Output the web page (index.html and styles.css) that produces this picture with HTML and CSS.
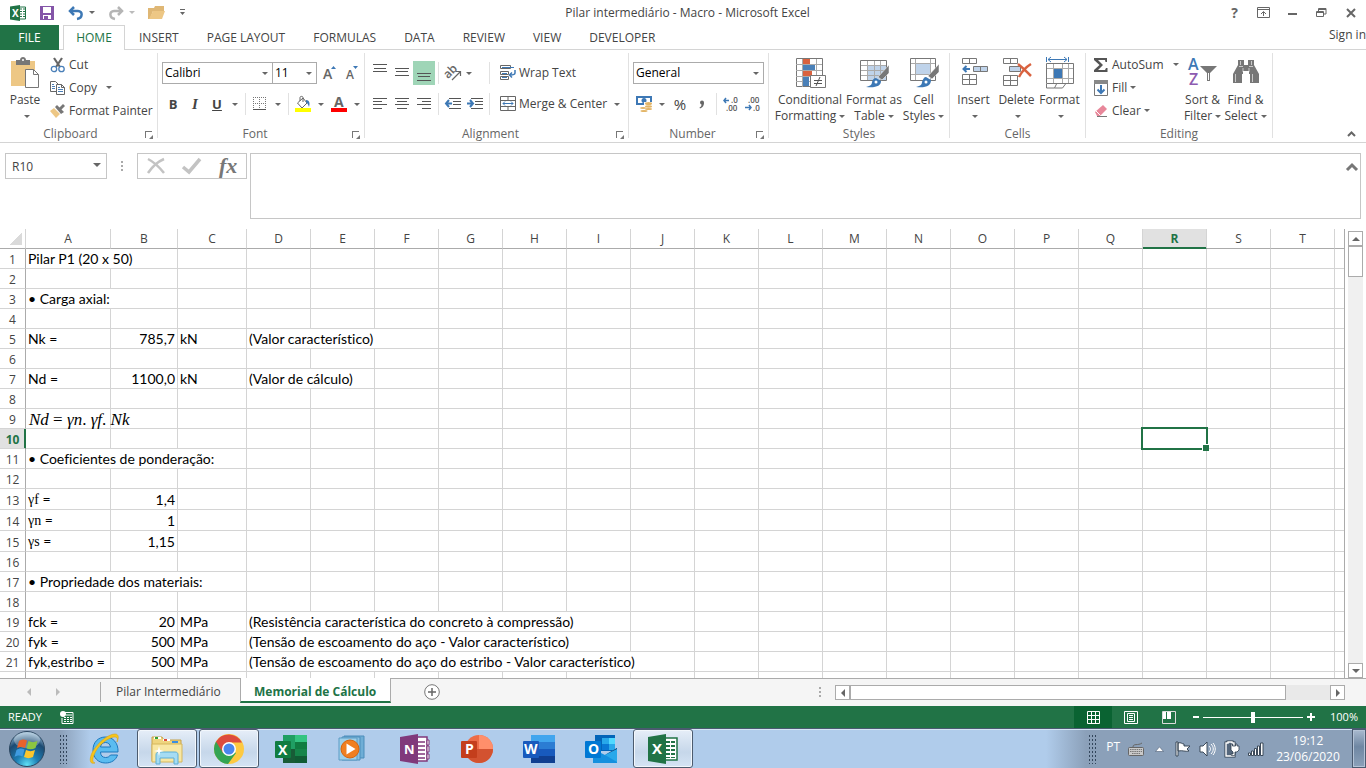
FILE: index.html
```
<!DOCTYPE html>
<html lang="en">
<head>
  <meta charset="UTF-8" />
  <meta name="viewport" content="width=device-width, initial-scale=1.0"/>
  <title>Pilar intermediário - Macro - Microsoft Excel</title>
  <link rel="stylesheet" href="styles.css">
</head>
<body>
  <!-- Title bar -->
  <header class="title-bar">
    <div class="quick-access">
      <svg class="app-icon" width="16" height="16" viewBox="0 0 16 16"><path d="M9 2h6.500v12H9z" fill="#fff" stroke="#217346"/><path d="M10 4h2M10 6.500h2M10 9h2M10 11.500h2M13 4h2M13 6.500h2M13 9h2M13 11.500h2" stroke="#217346"/><path d="M0 1.500L10 0v16L0 14.500z" fill="#217346"/><text x="2" y="12" font-size="10" font-weight="700" fill="#fff">X</text></svg>
      <button class="qa-btn" aria-label="Save"><svg width="14" height="14" viewBox="0 0 14 14"><path d="M0 0h14v14H0z" fill="#8455a8"/><path d="M3 1h8v6H3zM3 9h8v4H3z" fill="#fff"/><path d="M4 10h4v3H4z" fill="#8455a8"/></svg></button>
      <button class="qa-btn undo" aria-label="Undo"><svg width="16" height="14" viewBox="0 0 16 14"><path d="M2 5h8c5 0 5 7-1 8" fill="none" stroke="#3d78b5" stroke-width="2.500"/><path d="M6 1L2 5l4 4" fill="none" stroke="#3d78b5" stroke-width="2.500"/></svg><i class="caret"></i></button>
      <button class="qa-btn undo" aria-label="Redo"><svg width="16" height="14" viewBox="0 0 16 14"><path d="M14 5H6c-5 0-5 7 1 8" fill="none" stroke="#b5b5b5" stroke-width="2.500"/><path d="M10 1l4 4-4 4" fill="none" stroke="#b5b5b5" stroke-width="2.500"/></svg><i class="caret light"></i></button>
      <button class="qa-btn" aria-label="Open"><svg width="17" height="14" viewBox="0 0 17 14"><path d="M0 13V2h6l1-2h9v5H5L2 13z" fill="#dfb775"/><path d="M5 5h12l-3 8H1z" fill="#edc785"/></svg></button>
      <button class="qa-btn" aria-label="Customize Quick Access Toolbar"><svg width="7" height="7" viewBox="0 0 7 7"><path d="M1 0h5v1H1zM1 3h5L3.500 6z" fill="#666"/></svg></button>
    </div>
    <h1>Pilar intermediário - Macro - Microsoft Excel</h1>
    <div class="window-buttons">
      <button aria-label="Help" class="help">?</button>
      <button aria-label="Ribbon Display Options"><svg width="13" height="11" viewBox="0 0 13 11"><path d="M.5.5h12v10H.5zM0 2.500h13M6.500 9V5M4 7l2.500-2.500L9 7" fill="none" stroke="#666"/></svg></button>
      <button aria-label="Minimize"><svg width="9" height="9" viewBox="0 0 9 9"><path d="M0 5h9v2H0z" fill="#666"/></svg></button>
      <button aria-label="Restore Down"><svg width="11" height="10" viewBox="0 0 11 10"><path d="M.5 3.500h7v5h-7zM.5 4.500h7M2.500 3V.5h7.500v5.500H8M2.500 1.500H10" fill="none" stroke="#666"/></svg></button>
      <button aria-label="Close"><svg width="10" height="10" viewBox="0 0 10 10"><path d="M1 1l8 8M9 1L1 9" stroke="#666" stroke-width="2"/></svg></button>
    </div>
  </header>

  <!-- Ribbon tabs -->
  <nav class="ribbon-tabs">
    <button class="tab file">FILE</button>
    <button class="tab active">HOME</button>
    <button class="tab">INSERT</button>
    <button class="tab">PAGE LAYOUT</button>
    <button class="tab">FORMULAS</button>
    <button class="tab">DATA</button>
    <button class="tab">REVIEW</button>
    <button class="tab">VIEW</button>
    <button class="tab">DEVELOPER</button>
    <a class="sign-in" href="#">Sign in</a>
  </nav>

  <!-- Ribbon -->
  <section class="ribbon">
    <div class="group clipboard">
      <div class="group-body">
        <button class="big-btn paste"><svg width="28" height="32" viewBox="0 0 28 32"><path d="M0 4h24v25H0z" fill="#edc785"/><path d="M5 3h4c0-4 6-4 6 0h4v5H5z" fill="#777"/><circle cx="12" cy="3" r="1" fill="#fff"/><path d="M14.500 12.500h8l5 5v13h-13z" fill="#fff" stroke="#777"/><path d="M22.500 12.500v5h5" fill="none" stroke="#777"/></svg><span>Paste</span><span><i class="caret"></i></span></button>
        <div class="small-list">
          <button class="small-btn"><svg width="16" height="16" viewBox="0 0 16 16"><path d="M4 1l6 9M12 1L6 10" stroke="#666" stroke-width="2.200"/><circle cx="4" cy="12" r="2.700" fill="none" stroke="#4a7fb8" stroke-width="1.300"/><circle cx="11.500" cy="12" r="2.700" fill="none" stroke="#4a7fb8" stroke-width="1.300"/></svg>Cut</button>
          <button class="small-btn"><svg width="16" height="16" viewBox="0 0 16 16"><path d="M.5 1.500h5l3 3v7h-8z" fill="#fff" stroke="#666"/><path d="M2 4.500h2M2 6.500h3M2 8.500h3" stroke="#4a7fb8"/><path d="M6.500 4.500h5l3 3v7h-8z" fill="#fff" stroke="#666"/><path d="M11.500 4.500v3h3" fill="none" stroke="#666"/><path d="M8 9.500h5M8 11.500h5M8 7.500h2" stroke="#4a7fb8"/></svg>Copy<i class="caret far"></i></button>
          <button class="small-btn"><svg width="16" height="16" viewBox="0 0 16 16"><path d="M0 8l4-3 6 6-4 4z" fill="#edc785"/><path d="M5 4l2-2 7 7-3 2z" fill="#777"/><path d="M9 5l4-4 2 2-4 4z" fill="#777"/></svg>Format Painter</button>
        </div>
      </div>
      <div class="group-label">Clipboard<button class="launcher" aria-label="Clipboard settings"></button></div>
    </div>

    <div class="group font">
      <div class="group-body rows">
        <div class="tool-row">
          <label class="combo name"><select aria-label="Font"><option>Calibri</option></select></label>
          <label class="combo size"><select aria-label="Font Size"><option>11</option></select></label>
          <button class="tool" aria-label="Increase Font Size"><svg width="14" height="16" viewBox="0 0 14 16"><text x="0" y="14" font-size="14" font-weight="600" fill="#666">A</text><path d="M8 4l2.500-3L13 4z" fill="#3d78b5"/></svg></button>
          <button class="tool" aria-label="Decrease Font Size"><svg width="14" height="16" viewBox="0 0 14 16"><text x="1" y="14" font-size="12" font-weight="600" fill="#666">A</text><path d="M8 1h5l-2.500 3z" fill="#3d78b5"/></svg></button>
        </div>
        <div class="tool-row">
          <button class="tool letter"><b>B</b></button>
          <button class="tool letter serif"><i>I</i></button>
          <button class="tool letter"><u>U</u></button>
          <button class="drop" aria-label="Underline options"><i class="caret"></i></button>
          <span class="sep"></span>
          <button class="tool" aria-label="Borders"><svg width="14" height="14" viewBox="0 0 14 14"><path d="M.5 0v13M6.500 0v13M12.500 0v13M0 .5h13M0 6.500h13" stroke="#777" stroke-dasharray="1 1"/><path d="M0 12.500h13" stroke="#555"/></svg></button>
          <button class="drop" aria-label="Border options"><i class="caret"></i></button>
          <span class="sep"></span>
          <button class="tool" aria-label="Fill Color"><svg width="16" height="16" viewBox="0 0 16 16"><path d="M2.500 7L8 2l4 5-5 5zM5 5V1.500c0-1.500 3-1.500 3 0V6" fill="#fff" stroke="#666"/><path d="M11 4c4 0 4 4 3 7-1-3-1-3-3-5z" fill="#3d78b5"/><path d="M0 12h16v4H0z" fill="#ff0"/></svg></button>
          <button class="drop" aria-label="Fill colors"><i class="caret"></i></button>
          <button class="tool" aria-label="Font Color"><svg width="16" height="16" viewBox="0 0 16 16"><text x="3" y="11" font-size="14" font-weight="700" fill="#666">A</text><path d="M0 12h16v4H0z" fill="#f00"/></svg></button>
          <button class="drop" aria-label="Font colors"><i class="caret"></i></button>
        </div>
      </div>
      <div class="group-label">Font<button class="launcher" aria-label="Font settings"></button></div>
    </div>

    <div class="group alignment">
      <div class="group-body rows">
        <div class="tool-row">
          <button class="tool" aria-label="Top Align"><svg width="14" height="22" viewBox="0 0 14 22"><path d="M0 2.500h14M1 6.500h12M0 9.500h14" stroke="#555"/></svg></button>
          <button class="tool" aria-label="Middle Align"><svg width="14" height="22" viewBox="0 0 14 22"><path d="M0 6.500h14M1 9.500h12M0 13.500h14" stroke="#555"/></svg></button>
          <button class="tool pressed" aria-label="Bottom Align"><svg width="14" height="22" viewBox="0 0 14 22"><path d="M0 11.500h14M1 14.500h12M0 18.500h14" stroke="#555"/></svg></button>
          <span class="sep"></span>
          <button class="tool" aria-label="Orientation"><svg width="17" height="16" viewBox="0 0 17 16"><text x="-1" y="11" font-size="12" font-weight="600" fill="#666" transform="rotate(-45 5 8)">ab</text><path d="M7 15l8-8M11 6.500h4.500V11" fill="none" stroke="#666" stroke-width="1.200"/></svg></button>
          <button class="drop narrow" aria-label="Orientation options"><i class="caret"></i></button>
          <span class="sep wide"></span>
          <button class="text-tool"><svg width="16" height="16" viewBox="0 0 16 16"><path d="M.5.5h10v3H.5zM.5 6.500h8v3h-8zM.5 11.500h8v3h-8z" fill="#fff" stroke="#666"/><path d="M2 2.500h12M2 8.500h5M2 12.500h5" stroke="#3d78b5"/><path d="M15 5v3c0 2-2 2-5 2M12 7.500L9.500 10l2.500 2.500" fill="none" stroke="#3d78b5" stroke-width="1.500"/></svg>Wrap Text</button>
        </div>
        <div class="tool-row">
          <button class="tool" aria-label="Align Left"><svg width="14" height="12" viewBox="0 0 14 12"><path d="M0 .5h14M0 3.500h9M0 6.500h14M0 10.500h9" stroke="#555"/></svg></button>
          <button class="tool" aria-label="Center"><svg width="14" height="12" viewBox="0 0 14 12"><path d="M0 .5h14M2 3.500h10M0 6.500h14M2 10.500h10" stroke="#555"/></svg></button>
          <button class="tool" aria-label="Align Right"><svg width="14" height="12" viewBox="0 0 14 12"><path d="M0 .5h14M5 3.500h9M0 6.500h14M5 10.500h9" stroke="#555"/></svg></button>
          <span class="sep"></span>
          <button class="tool" aria-label="Decrease Indent"><svg width="16" height="12" viewBox="0 0 16 12"><path d="M4 .5h12M8 3.500h8M8 6.500h8M4 10.500h12" stroke="#555"/><path d="M7 5.500H1M4 2L1 5.500 4 9" fill="none" stroke="#3d78b5" stroke-width="2"/></svg></button>
          <button class="tool" aria-label="Increase Indent"><svg width="16" height="12" viewBox="0 0 16 12"><path d="M4 .5h12M8 3.500h8M8 6.500h8M4 10.500h12" stroke="#555"/><path d="M0 5.500h6M3 2l3 3.500L3 9" fill="none" stroke="#3d78b5" stroke-width="2"/></svg></button>
          <span class="sep"></span>
          <button class="text-tool"><svg width="16" height="16" viewBox="0 0 16 16"><path d="M.5.500h15v14H.5zM.5 4.500h15M.5 10.500h15M8 0v4M8 11v4" fill="none" stroke="#666"/><path d="M3 7.500h10M5 5.500l-2 2 2 2M11 5.500l2 2-2 2" fill="none" stroke="#3d78b5"/></svg>Merge &amp; Center<i class="caret"></i></button>
        </div>
      </div>
      <div class="group-label">Alignment<button class="launcher" aria-label="Alignment settings"></button></div>
    </div>

    <div class="group number">
      <div class="group-body rows">
        <div class="tool-row">
          <label class="combo format"><select aria-label="Number Format"><option>General</option></select></label>
        </div>
        <div class="tool-row">
          <button class="tool" aria-label="Accounting Number Format"><svg width="17" height="16" viewBox="0 0 17 16"><path d="M0 0h16v9H0z" fill="#3d78b5"/><path d="M2 2h12v5H2z" fill="#fff"/><circle cx="8" cy="4.500" r="2.500" fill="#3d78b5"/><path d="M8 6h9v9H4v-4h4z" fill="#fff"/><ellipse cx="12.500" cy="7.500" rx="3.500" ry="1.500" fill="#e3b567"/><ellipse cx="12.500" cy="10.500" rx="3.500" ry="1.200" fill="#e3b567"/><ellipse cx="12.500" cy="13" rx="3.500" ry="1" fill="#e3b567"/><ellipse cx="7" cy="12" rx="3" ry="1" fill="#e3b567"/><ellipse cx="8" cy="15" rx="3.500" ry="1" fill="#e3b567"/></svg></button>
          <button class="drop" aria-label="Accounting formats"><i class="caret"></i></button>
          <button class="tool letter percent">%</button>
          <button class="tool letter comma" aria-label="Comma Style"><svg width="6" height="9" viewBox="0 0 6 9"><circle cx="3" cy="2.500" r="2" fill="#666"/><path d="M5 2.500c0 3-1 5-4 6l-.5-1c2-1 2-2 2-4z" fill="#666"/></svg></button>
          <span class="sep"></span>
          <button class="tool" aria-label="Increase Decimal"><svg width="16" height="14" viewBox="0 0 16 14"><text x="8" y="6" font-size="8" font-weight="600" fill="#555">.0</text><text x="3" y="14" font-size="8" font-weight="600" fill="#555">.00</text><path d="M6 3.500H1M3 1L1 3.500 3 6" fill="none" stroke="#3d78b5" stroke-width="1.500"/></svg></button>
          <button class="tool" aria-label="Decrease Decimal"><svg width="16" height="14" viewBox="0 0 16 14"><text x="3" y="6" font-size="8" font-weight="600" fill="#555">.00</text><text x="8" y="14" font-size="8" font-weight="600" fill="#555">.0</text><path d="M0 10.500h6M4 8l2 2.500L4 13" fill="none" stroke="#3d78b5" stroke-width="1.500"/></svg></button>
        </div>
      </div>
      <div class="group-label">Number<button class="launcher" aria-label="Number settings"></button></div>
    </div>

    <div class="group styles">
      <div class="group-body">
        <button class="big-btn wide"><svg width="32" height="32" viewBox="0 0 32 32"><path d="M2.500 1.500h26v28h-26z" fill="#fff" stroke="#777"/><path d="M8.500 2v28M22.500 2v28M2 7.500h26M2 13.500h26M2 19.500h26M2 24.500h26" stroke="#aaa"/><path d="M9 2h7v5H9zM9 14h9v5H9z" fill="#d9623f"/><path d="M9 8h12v5H9zM9 20h6v9H9z" fill="#4a80b8"/><path d="M16.500 18.500h15v12h-15z" fill="#fff" stroke="#777"/><path d="M20 23.500h8M20 26.500h8M26 20l-4 9" stroke="#555"/></svg><span>Conditional</span><span>Formatting<i class="caret"></i></span></button>
        <button class="big-btn mid"><svg width="32" height="32" viewBox="0 0 32 32"><path d="M2.500 3.500h26v20h-26z" fill="#fff" stroke="#777"/><path d="M10 9h18v14H10z" fill="#bfd3ea"/><path d="M9.500 4v19M16.500 4v19M22.500 4v19M3 8.500h25M3 13.500h25M3 18.500h25" stroke="#aaa"/><path d="M31 8v8l-7 7-4-3z" fill="#777" stroke="#fff" stroke-width=".5"/><path d="M18 21l5 3c0 5-5 7-15 6 5-1 6-3 6-5 1-3 2-4 4-4z" fill="#3d78b5"/><circle cx="18" cy="25" r="1.500" fill="#fff"/></svg><span>Format as</span><span>Table<i class="caret"></i></span></button>
        <button class="big-btn"><svg width="32" height="32" viewBox="0 0 32 32"><path d="M2.500 1.500h25v22h-25z" fill="#fff" stroke="#777"/><path d="M8 7h14v10H8z" fill="#bfd3ea"/><path d="M7.500 2v21M22.500 2v21M3 6.500h24M3 17.500h24" stroke="#aaa"/><path d="M31 7v8l-7 7-4-3z" fill="#777" stroke="#fff" stroke-width=".5"/><path d="M18 20l5 3c0 6-5 8-15 7 5-1 6-3 6-5 1-3 2-5 4-5z" fill="#3d78b5"/><circle cx="18" cy="25" r="1.500" fill="#fff"/></svg><span>Cell</span><span>Styles<i class="caret"></i></span></button>
      </div>
      <div class="group-label">Styles</div>
    </div>

    <div class="group cells">
      <div class="group-body">
        <button class="big-btn"><svg width="28" height="32" viewBox="0 0 28 32"><path d="M2.500 1.500h14v5h-14zM9.500 1v5M2.500 17.500h14v10h-14zM9.500 17v10M2 22.500h14" fill="none" stroke="#777"/><path d="M13.500 9.500h14v5h-14z" fill="#bfd3ea" stroke="#777"/><path d="M20.500 9v6" stroke="#777"/><path d="M10 12H4M6.500 9L3.500 12l3 3" fill="none" stroke="#3d78b5" stroke-width="2"/></svg><span>Insert</span><span><i class="caret"></i></span></button>
        <button class="big-btn"><svg width="30" height="32" viewBox="0 0 30 32"><path d="M1.500 1.500h14v5h-14zM8.500 1v5M1.500 18.500h14v10h-14zM8.500 18v10M1 23.500h14" fill="none" stroke="#777"/><path d="M7.500 9.500h11v5h-11z" fill="#bfd3ea" stroke="#777"/><path d="M16 7c4 3 8 7 13 12M29 7c-5 3-9 7-12 13" fill="none" stroke="#d9623f" stroke-width="2.500"/></svg><span>Delete</span><span><i class="caret"></i></span></button>
        <button class="big-btn"><svg width="30" height="32" viewBox="0 0 30 32"><path d="M1.500 0v5M23.500 0v5M3 2.500h19M6 0L3 2.500 6 5M19 0l3 2.500L19 5" fill="none" stroke="#3d78b5"/><path d="M1.500 6.500h27v20h-27z" fill="#fff" stroke="#777"/><path d="M8.500 7v19M17.500 7v19M23.500 7v19M2 11.500h26M2 21.500h26" stroke="#aaa"/><path d="M9 12h8v9H9z" fill="#3d78b5"/><path d="M1.500 27v4h8l2-4M9.500 31h8l3-4" fill="none" stroke="#777"/></svg><span>Format</span><span><i class="caret"></i></span></button>
      </div>
      <div class="group-label">Cells</div>
    </div>

    <div class="group editing">
      <div class="group-body">
        <div class="small-list">
          <button class="small-btn"><svg width="16" height="16" viewBox="0 0 16 16"><path d="M1 1h13v4h-1.500L12 3H5l5 5-5 5h7l1-2h1.500v4H1v-2l5.500-5L1 3z" fill="#555"/></svg>AutoSum<i class="caret far"></i></button>
          <button class="small-btn"><svg width="16" height="16" viewBox="0 0 16 16"><path d="M1.500.5h13v15h-13z" fill="#fff" stroke="#777"/><path d="M1 0h14v4H1z" fill="#888"/><path d="M8 5v8M4.500 9.500L8 13l3.500-3.500" fill="none" stroke="#3d78b5" stroke-width="2"/></svg>Fill<i class="caret"></i></button>
          <button class="small-btn"><svg width="16" height="16" viewBox="0 0 16 16"><path d="M2 9l8-7 4 4-7 7H4z" fill="#e8879a"/><path d="M3 8l4.500 4.500" stroke="#fff"/><path d="M4 13.500h10" stroke="#777"/></svg>Clear<i class="caret"></i></button>
        </div>
        <button class="big-btn"><svg width="30" height="32" viewBox="0 0 30 32"><text x="0" y="13" font-size="16" font-weight="600" fill="#3d78b5">A</text><text x="1" y="28" font-size="16" font-weight="600" fill="#8d5bb0">Z</text><path d="M12 9h17l-7 7v8h-3v-8z" fill="#777"/><path d="M20.500 16v7" stroke="#fff"/></svg><span>Sort &amp;</span><span>Filter<i class="caret"></i></span></button>
        <button class="big-btn"><svg width="28" height="32" viewBox="0 0 28 32"><path d="M6 3h6v5h4V3h6v5l5 9v9h-9v-9h-1v-3h-6v3h-1v9H1v-9l5-9z" fill="#777"/><path d="M8.500 4v4M19.500 4v4M3.500 17v8M11 11v4M17 11v4M20.500 17v8M7 9.500h4M17 9.500h4" stroke="#fff" stroke-width=".6"/></svg><span>Find &amp;</span><span>Select<i class="caret"></i></span></button>
      </div>
      <div class="group-label">Editing</div>
    </div>
    <button class="collapse" aria-label="Collapse the Ribbon"><svg width="9" height="6" viewBox="0 0 9 6"><path d="M1 5l3.500-3.500L8 5" fill="none" stroke="#666" stroke-width="2"/></svg></button>
  </section>

  <!-- Formula bar -->
  <section class="formula-bar">
    <label class="name-box"><input type="text" value="R10" aria-label="Name Box"></label>
    <span class="dots"></span>
    <div class="formula-buttons">
      <button aria-label="Cancel"><svg width="18" height="16" viewBox="0 0 18 16"><path d="M1 1c6 3 12 9 16 14M17 1C10 4 5 9 1 15" fill="none" stroke="#c3c3c3" stroke-width="2.500"/></svg></button>
      <button aria-label="Enter"><svg width="20" height="16" viewBox="0 0 20 16"><path d="M1 9l6 5L18 1" fill="none" stroke="#c3c3c3" stroke-width="3.500"/></svg></button>
      <button class="fx">fx</button>
    </div>
    <div class="formula-input">
      <textarea aria-label="Formula Bar"></textarea>
      <button aria-label="Collapse Formula Bar"><svg width="12" height="8" viewBox="0 0 12 8"><path d="M1 7l5-5 5 5" fill="none" stroke="#777" stroke-width="3"/></svg></button>
    </div>
  </section>

  <!-- Worksheet -->
  <main class="sheet">
    <div class="grid-view" id="gridView"><table class="grid" id="grid"></table></div>
    <div class="v-scroll">
      <button class="scroll-btn up" aria-label="Scroll up"></button>
      <div class="thumb"></div>
      <button class="scroll-btn down" aria-label="Scroll down"></button>
    </div>
  </main>

  <!-- Sheet tabs -->
  <nav class="sheet-bar">
    <div class="sheet-nav">
      <button class="arrow left" aria-label="Previous sheet"></button>
      <button class="arrow right" aria-label="Next sheet"></button>
    </div>
    <button class="sheet-tab">Pilar Intermediário</button>
    <button class="sheet-tab active">Memorial de Cálculo</button>
    <button class="add-sheet" aria-label="New sheet"><svg width="16" height="16" viewBox="0 0 16 16"><circle cx="8" cy="8" r="7.300" fill="#fff" stroke="#777"/><path d="M8 4v8M4 8h8" stroke="#666" stroke-width="1.500"/></svg></button>
    <span class="dots"></span>
    <div class="h-scroll">
      <button class="scroll-btn left" aria-label="Scroll left"></button>
      <div class="thumb"></div>
      <button class="scroll-btn right" aria-label="Scroll right"></button>
    </div>
  </nav>

  <!-- Status bar -->
  <footer class="status-bar">
    <span>READY</span>
    <svg width="14" height="13" viewBox="0 0 14 13"><path d="M5 1.500h8v11H2V7" fill="none" stroke="#fff"/><path d="M6 4h6M4 6.500h2M7 6.500h2M10 6.500h2M4 8.500h2M7 8.500h2M10 8.500h2M4 10.500h2M7 10.500h2M10 10.500h2" stroke="#fff"/><circle cx="3" cy="3" r="3" fill="#fff"/></svg>
    <div class="views">
      <button class="on" aria-label="Normal"><svg width="13" height="13" viewBox="0 0 13 13"><path d="M.5.5h12v12H.5zM4.500 0v13M8.500 0v13M0 4.500h13M0 8.500h13" fill="none" stroke="#fff"/></svg></button>
      <button aria-label="Page Layout"><svg width="14" height="13" viewBox="0 0 14 13"><path d="M.5.5h13v12H.5zM3.500 2.500h7v8h-7zM5 4.500h4M5 6.500h4M5 8.500h4" fill="none" stroke="#fff"/></svg></button>
      <button aria-label="Page Break Preview"><svg width="14" height="13" viewBox="0 0 14 13"><path d="M.5.5h13v12H.5z" fill="none" stroke="#ddd"/><path d="M1 1h3v7H1zM5 1h4v7H5z" fill="#fff"/></svg></button>
    </div>
    <button class="zoom-btn" aria-label="Zoom out"><svg width="8" height="8" viewBox="0 0 8 8"><path d="M1 3h6v2H1z" fill="#fff"/></svg></button>
    <input class="zoom" type="range" min="10" max="190" value="100" aria-label="Zoom">
    <button class="zoom-btn" aria-label="Zoom in"><svg width="8" height="8" viewBox="0 0 8 8"><path d="M0 3h8v2H0zM3 0h2v8H3z" fill="#fff"/></svg></button>
    <span class="zoom-value">100%</span>
  </footer>

  <!-- Taskbar -->
  <footer class="taskbar">
    <button class="start" aria-label="Start"><svg width="38" height="38" viewBox="0 0 38 38">
      <defs><radialGradient id="orb" cx=".5" cy=".95" r=".9"><stop offset="0" stop-color="#5fe0f5"/><stop offset=".35" stop-color="#1d7fb5"/><stop offset=".75" stop-color="#1c4a72"/><stop offset="1" stop-color="#8fb4cf"/></radialGradient></defs>
      <circle cx="19" cy="19" r="17.500" fill="url(#orb)" stroke="#2b4660"/><ellipse cx="19" cy="10" rx="13" ry="8" fill="#fff" opacity=".3"/>
      <path d="M11 11c3-2 5-2 8-.5l-2 7.500c-3-1.500-5-1.500-8 0z" fill="#e8622c"/><path d="M20.500 11c3 1.500 6 1.500 9 0l-2 7c-3 1.500-6 1.500-9 .5z" fill="#8cc540"/><path d="M8.500 20c3-2 5-2 8-.5l-2 7c-3-1.500-5-1.500-8 .5z" fill="#3f9be0"/><path d="M18 20c3 1.500 6 1.500 9 0l-2 7c-3 1.500-6 1.500-9 0z" fill="#fcc62d"/></svg></button>
    <span class="grip"></span>
    <div class="apps">
      <button aria-label="Internet Explorer"><svg width="32" height="32" viewBox="0 0 32 32"><path d="M16.500 4C9 4 4 9.500 4 17s5 13 12.500 13c6 0 10.500-3 12-8h-7c-1 1.500-2.500 2.500-5 2.500-3 0-5-2-5-5.500h17.500C29.500 10 24 4 16.500 4zM11.500 14c.5-3 2.500-4.500 5-4.500s4.500 1.500 5 4.500z" fill="#5bbcf0" stroke="#1c78bd"/><path d="M6 30C0 32 0 25 4 18 10 8 20 1 26 1c4 0 4 4 2 8 1-4 0-5-3-5C19 5 11 11 7 18c-4 7-4 11-1 12z" fill="#f6c51c" stroke="#d59b10" stroke-width=".5"/></svg></button>
      <button class="open" aria-label="Windows Explorer"><svg width="32" height="32" viewBox="0 0 32 32"><path d="M1 4h10l2 3h17v21H1z" fill="#efd57f" stroke="#c7a24a"/><path d="M3 4h7v2H3zM12 6h7v2h-7z" fill="#fff"/><path d="M4 4h3v2H4z" fill="#35a035"/><path d="M13 6h3v2h-3z" fill="#dd4b39"/><path d="M21 8h6v2h-6z" fill="#3b8ee0"/><path d="M1 11h30v18H1z" fill="#f8e7a3" stroke="#d5b65c"/><path d="M5 31V22c0-2 1-3 3-3h16c2 0 3 1 3 3v9h-4v-6H9v6z" fill="#a5dcf3" stroke="#5caed6"/><path d="M8 13l1 4 4 1-4 1-1 4-1-4-4-1 4-1z" fill="#fff"/></svg></button>
      <button class="open" aria-label="Google Chrome"><svg width="30" height="30" viewBox="0 0 30 30"><circle cx="15" cy="15" r="15" fill="#fdc941"/><path d="M15 15L2 7.500A15 15 0 0 0 14 30l8-11z" fill="#33a453"/><path d="M2 7.500A15 15 0 0 1 28 8.500H15L9 19z" fill="#dd4b3e"/><circle cx="15" cy="15" r="7" fill="#fff"/><circle cx="15" cy="15" r="5.500" fill="#4a86ee"/></svg></button>
      <button aria-label="Excel"><svg width="32" height="28" viewBox="0 0 32 28"><path d="M8 0h12v14H8z" fill="#1f9f63"/><path d="M20 0h12v7H20z" fill="#33c481"/><path d="M20 7h12v7H20z" fill="#107c41"/><path d="M8 14h12v14H8z" fill="#185c37"/><path d="M20 14h12v7H20z" fill="#16854a"/><path d="M20 21h12v7H20z" fill="#105c34"/><rect y="6" width="16" height="17" rx="1" fill="#107c41"/><text x="3" y="20" font-size="14" font-weight="700" fill="#fff">X</text></svg></button>
      <button aria-label="Windows Media Player"><svg width="30" height="28" viewBox="0 0 30 28"><path d="M6 1h20v22H6z" fill="#6faed6" stroke="#4c8dba"/><path d="M4 2h18v23H4z" fill="#8bc2e2" stroke="#4c8dba"/><path d="M1 3h18v22H1z" fill="#9fd0ea" stroke="#5c9cc4"/><circle cx="12" cy="14" r="9" fill="#f07f21" stroke="#d8640c"/><path d="M8.500 8.500l9 5.500-9 5.500z" fill="#fff"/></svg></button>
      <button aria-label="OneNote"><svg width="30" height="30" viewBox="0 0 30 30"><path d="M16 3h11v24H16z" fill="#fff" stroke="#80397b" stroke-width="1.500"/><path d="M27 6h2v5h-2zM27 12h2v6h-2zM27 20h2v5h-2z" fill="#fff" stroke="#80397b"/><path d="M18 8h7M18 12h7M18 16h7M18 20h7M18 24h7" stroke="#80397b" stroke-width="1.300"/><path d="M0 3l18-3v30L0 27z" fill="#80397b"/><text x="4" y="20" font-size="13" font-weight="700" fill="#fff">N</text></svg></button>
      <button aria-label="PowerPoint"><svg width="32" height="28" viewBox="0 0 32 28"><circle cx="18" cy="14" r="14" fill="#ed6c47"/><path d="M18 0a14 14 0 0 1 14 14H18z" fill="#ff8f6b"/><path d="M4 14h28a14 14 0 0 1-28 0z" fill="#d35230"/><rect y="6" width="16" height="17" rx="1" fill="#c43e1c"/><text x="4" y="19" font-size="14" font-weight="700" fill="#fff">P</text></svg></button>
      <button aria-label="Word"><svg width="32" height="28" viewBox="0 0 32 28"><path d="M8 0h24v7H8z" fill="#41a5ee"/><path d="M8 7h24v7H8z" fill="#2b7cd3"/><path d="M8 14h24v7H8z" fill="#185abd"/><path d="M8 21h24v7H8z" fill="#103f91"/><rect y="6" width="16" height="17" rx="1" fill="#185abd"/><text x="1" y="19" font-size="14" font-weight="700" fill="#fff">W</text></svg></button>
      <button aria-label="Outlook"><svg width="32" height="28" viewBox="0 0 32 28"><path d="M10 0h20v16H10z" fill="#0364b8"/><path d="M17 3h7v6h-7z" fill="#28a8ea"/><path d="M24 3h6v6h-6z" fill="#50d9ff"/><path d="M17 9h7v6h-7z" fill="#0a78d4"/><path d="M24 9h6v6h-6z" fill="#28a8ea"/><path d="M8 14l12 6 12-7v15H8z" fill="#1490df"/><path d="M20 20l12-7v14z" fill="#28a8ea"/><path d="M20 20l12-6v-1z" fill="#123b6d"/><rect y="6" width="16" height="17" rx="1" fill="#0078d4"/><text x="3" y="19" font-size="14" font-weight="700" fill="#fff">O</text></svg></button>
      <button class="open" aria-label="Excel window"><svg width="30" height="30" viewBox="0 0 30 30"><path d="M16 4h13v22H16z" fill="#fff" stroke="#217346" stroke-width="1.500"/><path d="M18 7h4v2h-4zM18 11h4v2h-4zM18 15h4v2h-4zM18 19h4v2h-4zM18 23h4v1h-4zM23 7h4v2h-4zM23 11h4v2h-4zM23 15h4v2h-4zM23 19h4v2h-4zM23 23h4v1h-4z" fill="#217346"/><path d="M0 3l18-3v30L0 27z" fill="#217346"/><text x="4" y="20" font-size="15" font-weight="700" fill="#fff">X</text></svg></button>
    </div>
    <div class="tray">
      <span class="grip"></span>
      <span class="lang">PT</span>
      <svg width="16" height="14" viewBox="0 0 16 14"><path d="M5 5c0-4 5-1 9-4" fill="none" stroke="#666"/><rect x=".5" y="5.500" width="15" height="8" rx="1" fill="#c9c9c9" stroke="#666"/><path d="M2 7.500h12M2 9.500h12M4 11.500h8" stroke="#777" stroke-dasharray="1.500 .7"/></svg>
      <svg class="more" width="9" height="6" viewBox="0 0 9 6"><path d="M.5 5.500h8L4.500.8z" fill="#fff" stroke="#4b5d73" stroke-width=".6"/></svg>
      <svg class="flag" width="16" height="16" viewBox="0 0 16 16"><path d="M1 1h2v14H1zM3 2c3-1 4 1 6 1v2h6l-3 3 2 2c-4 1-6-1-11 0z" fill="#fff" stroke="#2e3c4c" stroke-width=".9"/></svg>
      <svg width="17" height="16" viewBox="0 0 17 16"><path d="M1 5h3l4-4v14l-4-4H1z" fill="#fff" stroke="#2e3c4c" stroke-width=".9"/><path d="M10 5c2 2 2 4 0 6M12 3c3 3 3 7 0 10M14 2c3 4 3 8 0 12" fill="none" stroke="#fff"/></svg>
      <svg width="16" height="16" viewBox="0 0 16 16"><path d="M2 2h2V1h4v1h2v13H2z" fill="none" stroke="#2e3c4c" stroke-width="3"/><path d="M2 2h2V1h4v1h2v13H2z" fill="#55677c" stroke="#fff" stroke-width="1.400"/><path d="M7 6V3h1.500v2h3V3H13v2h2v4l-2 2h-2v3c-1 1-3 1-4 0v-1h2v-2L7 9z" fill="#fff" stroke="#2e3c4c" stroke-width=".8"/></svg>
      <svg width="16" height="14" viewBox="0 0 16 14"><path d="M.5 11h2v2.500h-2zM3.500 9h2v4.500h-2zM6.500 6.500h2v7h-2zM9.500 4h2v9.500h-2zM12.500 1h2.500v12.500h-2.500z" fill="#fff" stroke="#2e3c4c" stroke-width=".9"/></svg>
      <div class="clock"><span>19:12</span><span>23/06/2020</span></div>
      <button class="show-desktop" aria-label="Show desktop"></button>
    </div>
  </footer>

  <script>
    const allColumns = 'ABCDEFGHIJKLMNOPQRSTUVWXYZ'.split('');
    const active = { col: 'R', row: 10 };
    const tallRows = [13, 14, 15];
    const gridView = document.getElementById('gridView');

    // span = how many columns the text runs over
    const cells = {
      A1: { text: 'Pilar P1 (20 x 50)', span: 2 },
      A3: { text: '• Carga axial:', span: 2 },
      A5: { text: 'Nk =' }, B5: { text: '785,7', num: true }, C5: { text: 'kN' },
      D5: { text: '(Valor característico)', span: 3 },
      A7: { text: 'Nd =' }, B7: { text: '1100,0', num: true }, C7: { text: 'kN' },
      D7: { text: '(Valor de cálculo)', span: 2 },
      A9: { text: '<span class="equation"><i>Nd</i> = <i>γn</i>. <i>γf</i>. <i>Nk</i></span>' },
      A11: { text: '• Coeficientes de ponderação:', span: 3 },
      A13: { text: '<span class="greek">γf</span> =' }, B13: { text: '1,4', num: true },
      A14: { text: '<span class="greek">γn</span> =' }, B14: { text: '1', num: true },
      A15: { text: '<span class="greek">γs</span> =' }, B15: { text: '1,15', num: true },
      A17: { text: '• Propriedade dos materiais:', span: 3 },
      A19: { text: 'fck =' }, B19: { text: '20', num: true }, C19: { text: 'MPa' },
      D19: { text: '(Resistência característica do concreto à compressão)', span: 6 },
      A20: { text: 'fyk =' }, B20: { text: '500', num: true }, C20: { text: 'MPa' },
      D20: { text: '(Tensão de escoamento do aço - Valor característico)', span: 6 },
      A21: { text: 'fyk,estribo =' }, B21: { text: '500', num: true }, C21: { text: 'MPa' },
      D21: { text: '(Tensão de escoamento do aço do estribo - Valor característico)', span: 7 }
    };

    function renderGrid() {
      const rowCount = Math.ceil((gridView.clientHeight - 20) / 20);
      // header + A, B, C take 247px, every other column 64px
      const colCount = Math.max(10, 3 + Math.ceil((gridView.clientWidth - 247) / 64));
      const columns = allColumns.slice(0, colCount);

      let html = '<colgroup><col class="col-head"><col class="col-a"><col class="col-b"><col class="col-c">';
      html += '<col>'.repeat(columns.length - 3) + '</colgroup>';
      html += '<thead><tr><th class="corner"></th>';
      columns.forEach((c, i) => {
        // the letter of a column that is mostly out of view is left out
        const label = 247 + (i - 2) * 64 - 24 > gridView.clientWidth ? '' : c;
        html += `<th class="${c === active.col ? 'current' : ''}">${label}</th>`;
      });
      html += '</tr></thead><tbody>';

      for (let r = 1; r <= rowCount; r++) {
        html += `<tr class="${tallRows.includes(r) ? 'tall' : ''}">`;
        html += `<th class="${r === active.row ? 'current' : ''}">${r}</th>`;
        for (let i = 0; i < columns.length; i++) {
          const cell = cells[columns[i] + r];
          if (columns[i] === active.col && r === active.row) {
            html += '<td class="selected"></td>';
          } else if (cell) {
            html += `<td class="${cell.num ? 'num' : ''}" colspan="${cell.span || 1}">${cell.text}</td>`;
            i += (cell.span || 1) - 1;
          } else {
            html += '<td></td>';
          }
        }
        html += '</tr>';
      }
      document.getElementById('grid').innerHTML = html + '</tbody>';
    }

    window.addEventListener('resize', renderGrid);
    renderGrid();
  </script>
</body>
</html>
```
FILE: styles.css
```
:root {
  --green: #217346;
  --line: #d4d4d4;
  --border: #ababab;
  --text: #444;
}

* {
  box-sizing: border-box;
}

body {
  margin: 0;
  height: 100vh;
  display: flex;
  flex-direction: column;
  overflow: hidden;
  font-family: "Open Sans", "Noto Sans", sans-serif;
  font-size: 12px;
  line-height: 16px;
  color: var(--text);
  background: #fff;
}

button, input, select, textarea {
  font: inherit;
  color: inherit;
  background: none;
  border: none;
  border-radius: 0;
  padding: 0;
  margin: 0;
}

svg {
  flex: none;
  display: block;
  overflow: visible;
}

.caret {
  flex: none;
  display: inline-block;
  border: 3px solid transparent;
  border-top-color: #666;
  border-bottom: none;
}

.caret.light {
  border-top-color: #bbb;
}

/* Title bar */
.title-bar {
  flex: none;
  height: 25px;
  display: flex;
  align-items: center;
}

.quick-access {
  flex: 1;
  display: flex;
  align-items: center;
  gap: 14px;
  padding-left: 10px;
}

.qa-btn {
  display: flex;
  align-items: center;
  gap: 5px;
}

.qa-btn.undo {
  width: 26px;
}

.title-bar h1 {
  margin: 0;
  font-size: 12px;
  font-weight: 400;
}

.window-buttons {
  flex: 1;
  display: flex;
  justify-content: flex-end;
  padding-right: 1px;
}

.window-buttons button {
  width: 29px;
  height: 22px;
  display: flex;
  align-items: center;
  justify-content: center;
}

.window-buttons .help {
  font-size: 14px;
  font-weight: 700;
  color: #666;
}

/* Ribbon tabs */
.ribbon-tabs {
  flex: none;
  height: 25px;
  display: flex;
  border-bottom: 1px solid var(--line);
}

.tab {
  height: 25px;
  padding: 0 14px;
}

.tab.file {
  width: 59px;
  margin-right: 4px;
  color: #fff;
  background: var(--green);
}

.tab.active {
  width: 62px;
  padding: 0;
  color: var(--green);
  background: #fff;
  border: 1px solid var(--line);
  border-bottom: none;
}

.sign-in {
  margin-left: auto;
  padding-top: 2px;
  color: var(--text);
  text-decoration: none;
  white-space: nowrap;
}

/* Ribbon */
.ribbon {
  flex: none;
  display: flex;
  padding: 3px 0 0;
  border-bottom: 1px solid var(--line);
}

.group {
  flex: none;
  display: flex;
  flex-direction: column;
  position: relative;
  border-right: 1px solid #e1e1e1;
  margin-bottom: 4px;
}

.group-body {
  height: 73px;
  display: flex;
}

.group-body.rows {
  flex-direction: column;
  gap: 7px;
  padding-top: 8px;
}

.group-label {
  height: 12px;
  line-height: 16px;
  text-align: center;
  padding-right: 16px;
  color: #666;
}

.launcher {
  position: absolute;
  right: 5px;
  bottom: 0;
  width: 7px;
  height: 7px;
  border-left: 1px solid #777;
  border-top: 1px solid #777;
}

.launcher::after {
  content: "";
  position: absolute;
  right: -1px;
  bottom: -1px;
  border: 2px solid #777;
  border-left-color: transparent;
  border-top-color: transparent;
}

.clipboard { width: 158px; }
.font { width: 207px; padding-left: 4px; }
.alignment { width: 264px; padding-left: 4px; }
.number { width: 140px; padding-left: 4px; }
.styles { width: 181px; }
.cells { width: 136px; }
.editing { width: 187px; }

.styles .group-body {
  padding-left: 5px;
}

.cells .group-body {
  padding-left: 2px;
}

.styles .group-label,
.cells .group-label,
.editing .group-label {
  padding-right: 0;
}

.big-btn {
  width: 43px;
  padding-top: 4px;
  display: flex;
  flex-direction: column;
  align-items: center;
  white-space: nowrap;
}

.big-btn svg {
  margin-bottom: 3px;
}

.big-btn span {
  height: 16px;
}

.big-btn .caret {
  margin: 0 0 2px 3px;
}

.big-btn.paste { width: 50px; }
.big-btn.wide { width: 72px; }
.big-btn.mid { width: 56px; }

.small-btn {
  height: 23px;
  display: flex;
  align-items: center;
  gap: 3px;
  white-space: nowrap;
}

.small-btn .far {
  margin-left: 6px;
}

.editing .small-list {
  width: 95px;
  padding-left: 7px;
}

.tool-row {
  height: 24px;
  display: flex;
  align-items: center;
}

.tool {
  width: 22px;
  height: 24px;
  flex: none;
  display: flex;
  align-items: center;
  justify-content: center;
}

.tool.pressed {
  background: #9fd5b7;
}

.tool.letter {
  font-size: 13px;
}

.tool.serif {
  font-family: "Liberation Serif", serif;
  font-size: 15px;
  font-weight: 700;
}

.letter u {
  font-weight: 700;
}

.tool.percent {
  font-size: 15px;
}

.drop {
  width: 14px;
  height: 22px;
  flex: none;
  display: flex;
  align-items: center;
  justify-content: center;
}

.drop.narrow {
  width: 10px;
}

.sep {
  width: 1px;
  height: 22px;
  flex: none;
  margin: 0 3px;
  background: #e1e1e1;
}

.sep.wide {
  margin-left: 15px;
}

.text-tool {
  display: flex;
  align-items: center;
  gap: 3px;
  padding-left: 7px;
  white-space: nowrap;
}

.text-tool .caret {
  margin-left: 4px;
}

.combo {
  position: relative;
  height: 22px;
  border: 1px solid var(--border);
  color: #000;
}

.combo + .combo {
  margin-left: -1px;
}

.combo select {
  appearance: none;
  width: 100%;
  height: 20px;
  padding-left: 2px;
}

.combo::after,
.name-box::after {
  content: "";
  position: absolute;
  right: 4px;
  top: 9px;
  border: 3px solid transparent;
  border-top-color: #666;
  border-bottom: none;
}

.combo.name { width: 111px; }
.combo.size { width: 45px; margin-right: 2px; }
.combo.format { width: 131px; }

.collapse {
  margin: auto 10px 5px auto;
}

/* Formula bar */
.formula-bar {
  flex: none;
  display: flex;
  align-items: flex-start;
  padding: 10px 5px 10px;
}

.name-box {
  position: relative;
  width: 102px;
  height: 26px;
  border: 1px solid #c6c6c6;
}

.name-box input {
  width: 80px;
  height: 24px;
  padding-left: 6px;
}

.name-box::after {
  border-width: 4px;
  border-bottom: none;
  right: 5px;
}

.dots {
  width: 2px;
  height: 10px;
  margin: 8px 14px;
  background: repeating-linear-gradient(#aaa 0 2px, transparent 2px 4px);
}

.formula-buttons {
  width: 110px;
  height: 26px;
  display: flex;
  justify-content: space-around;
  align-items: center;
  border: 1px solid #c6c6c6;
}

.fx {
  font: italic 700 22px/22px "Liberation Serif", serif;
  color: #777;
}

.formula-input {
  flex: 1;
  height: 66px;
  display: flex;
  align-items: flex-start;
  margin-left: 3px;
  border: 1px solid #c6c6c6;
}

.formula-input textarea {
  flex: 1;
  height: 64px;
  resize: none;
  outline: none;
}

.formula-input button {
  margin: 9px 2px;
}

/* Worksheet */
.sheet {
  flex: 1;
  min-height: 0;
  display: flex;
}

.grid-view {
  flex: 1;
  min-width: 0;
  overflow: hidden;
  position: relative;
  border-right: 1px solid var(--border);
}

.grid {
  width: 0;
  table-layout: fixed;
  border-collapse: separate;
  border-spacing: 0;
}

.grid col { width: 64px; }
.grid .col-head { width: 26px; }
.grid .col-a { width: 85px; }
.grid .col-b { width: 67px; }
.grid .col-c { width: 69px; }

.grid th {
  height: 20px;
  padding: 0;
  font-weight: 400;
  line-height: 19px;
  border-right: 1px solid var(--line);
  border-bottom: 1px solid var(--line);
}

.grid thead th {
  border-bottom-color: var(--border);
}

.grid tbody th {
  padding-top: 2px;
  line-height: 17px;
  border-right-color: var(--border);
}

.grid th.current {
  font-weight: 700;
  color: var(--green);
  background: #e1e1e1;
}

.grid thead th.current {
  box-shadow: inset 0 -1px var(--green);
  border-bottom-color: var(--green);
}

.grid tbody th.current {
  box-shadow: inset -1px 0 var(--green);
  border-right-color: var(--green);
}

.grid .corner {
  background: linear-gradient(135deg, transparent 50%, #dadada 50%) 10px 4px / 12px 12px no-repeat;
}

.grid td {
  height: 20px;
  padding: 0 2px;
  font-family: Lato, sans-serif;
  font-size: 14px;
  font-variant-ligatures: none;
  line-height: 19px;
  color: #000;
  white-space: nowrap;
  position: relative;
  border-right: 1px solid var(--line);
  border-bottom: 1px solid var(--line);
}

.grid .tall td {
  height: 21px;
}

.grid td.num {
  text-align: right;
}

.grid td.selected {
  z-index: 2;
}

.grid .selected::before {
  content: "";
  position: absolute;
  inset: -2px;
  border: 2px solid var(--green);
}

.grid .selected::after {
  content: "";
  position: absolute;
  right: -3px;
  bottom: -3px;
  width: 6px;
  height: 6px;
  background: var(--green);
  border: 1px solid #fff;
  border-right: none;
  border-bottom: none;
}

/* floats over the cells like a text box */
.equation {
  position: absolute;
  left: 3px;
  top: 1px;
  z-index: 1;
  font: 17px/19px "Liberation Serif", serif;
}

.greek {
  font-family: "Liberation Serif", serif;
}

.v-scroll {
  width: 15px;
  margin: 2px 3px 0;
  display: flex;
  flex-direction: column;
  background: #f0f0f0;
}

.scroll-btn {
  width: 15px;
  height: 15px;
  flex: none;
  display: flex;
  align-items: center;
  justify-content: center;
  background: #fff;
  border: 1px solid var(--border);
}

.scroll-btn::after {
  content: "";
  border: 4px solid transparent;
}

.scroll-btn.up::after { border-bottom-color: #666; border-top: none; }
.scroll-btn.down::after { border-top-color: #666; border-bottom: none; }
.scroll-btn.left::after { border-right-color: #666; border-left: none; }
.scroll-btn.right::after { border-left-color: #666; border-right: none; }

.scroll-btn.down {
  margin-top: auto;
}

.thumb {
  background: #fff;
  border: 1px solid var(--border);
}

.v-scroll .thumb {
  height: 31px;
}

/* Sheet tabs */
.sheet-bar {
  flex: none;
  height: 28px;
  display: flex;
  background: #f5f5f5;
  border-top: 1px solid var(--border);
}

.sheet-nav {
  width: 101px;
  display: flex;
  align-items: center;
  padding-left: 27px;
  gap: 25px;
  margin: 3px 0 4px;
  border-right: 1px solid var(--border);
}

.arrow {
  border: 4px solid transparent;
}

.arrow.left { border-right-color: #bbb; border-left: none; }
.arrow.right { border-left-color: #bbb; border-right: none; }

.sheet-tab {
  height: 25px;
  padding: 0 19px 0 15px;
}

.sheet-tab.active {
  width: 151px;
  margin-top: -1px;
  padding: 4px 0 0;
  font-weight: 700;
  color: var(--green);
  background: #fff;
  border: 1px solid var(--border);
  border-width: 0 1px 2px;
  border-bottom-color: var(--green);
}

.add-sheet {
  margin: 0 0 2px 33px;
}

.sheet-bar .dots {
  margin: 8px 14px 0 auto;
}

.h-scroll {
  width: 510px;
  height: 15px;
  display: flex;
  margin: 6px 21px 0 0;
  background: #e9e9e9;
}

.h-scroll .thumb {
  width: 436px;
}

.scroll-btn.right {
  margin-left: auto;
}

/* Status bar */
.status-bar {
  flex: none;
  height: 22px;
  display: flex;
  align-items: center;
  padding: 0 8px;
  font-size: 11px;
  color: #fff;
  background: var(--green);
}

.status-bar > svg {
  margin-left: 18px;
}

.views {
  margin-left: auto;
  display: flex;
}

.views button {
  width: 38px;
  height: 22px;
  display: flex;
  align-items: center;
  justify-content: center;
}

.views .on {
  background: #0a6332;
}

.zoom-btn {
  width: 8px;
}

.views + .zoom-btn {
  margin-left: 4px;
}

.zoom {
  appearance: none;
  width: 100px;
  height: 12px;
  margin: 0 4px 0 3px;
  background: linear-gradient(#fff, #fff) center / 100% 1px no-repeat;
}

.zoom::-webkit-slider-thumb {
  appearance: none;
  width: 4px;
  height: 11px;
  background: #fff;
}

.zoom-value {
  width: 43px;
  text-align: right;
}

/* Taskbar */
.taskbar {
  flex: none;
  height: 40px;
  display: flex;
  align-items: center;
  border-top: 1px solid #4a5a70;
  box-shadow: inset 0 1px #d5e4f5;
  background: linear-gradient(90deg, #8ba0b9 60px, #b0cceb 90px, #b0cceb calc(100% - 320px), #8ba0b9 calc(100% - 280px));
}

.start {
  margin-left: 8px;
}

.grip {
  width: 8px;
  height: 30px;
  margin-left: 13px;
  background: radial-gradient(#33465c 1px, transparent 1px) 0 0 / 3px 4px;
}

.apps {
  display: flex;
  gap: 2px;
  margin-left: 8px;
}

.apps button {
  width: 60px;
  height: 39px;
  display: flex;
  align-items: center;
  justify-content: center;
}

.apps .open {
  border: 1px solid #4c5b6e;
  border-radius: 3px;
  box-shadow: inset 0 0 0 1px #f2f7fc;
  background: linear-gradient(#e6eef8, #c6d7ea 60%, #d5e4f4);
}

.tray {
  margin-left: auto;
  height: 39px;
  display: flex;
  align-items: center;
  color: #fff;
}

.tray .lang {
  margin: -4px 0 0 10px;
}

.tray svg {
  margin-left: 8px;
}

.tray .more,
.tray .flag {
  margin-left: 11px;
}

.clock {
  width: 88px;
  display: flex;
  flex-direction: column;
  text-align: center;
}

.show-desktop {
  width: 14px;
  height: 39px;
  border: 1px solid #4a5a70;
  box-shadow: inset 0 0 0 1px #b4c3d6;
  background: linear-gradient(#a9bacf, #6f87a3 45%, #8ba0b9);
}
```
